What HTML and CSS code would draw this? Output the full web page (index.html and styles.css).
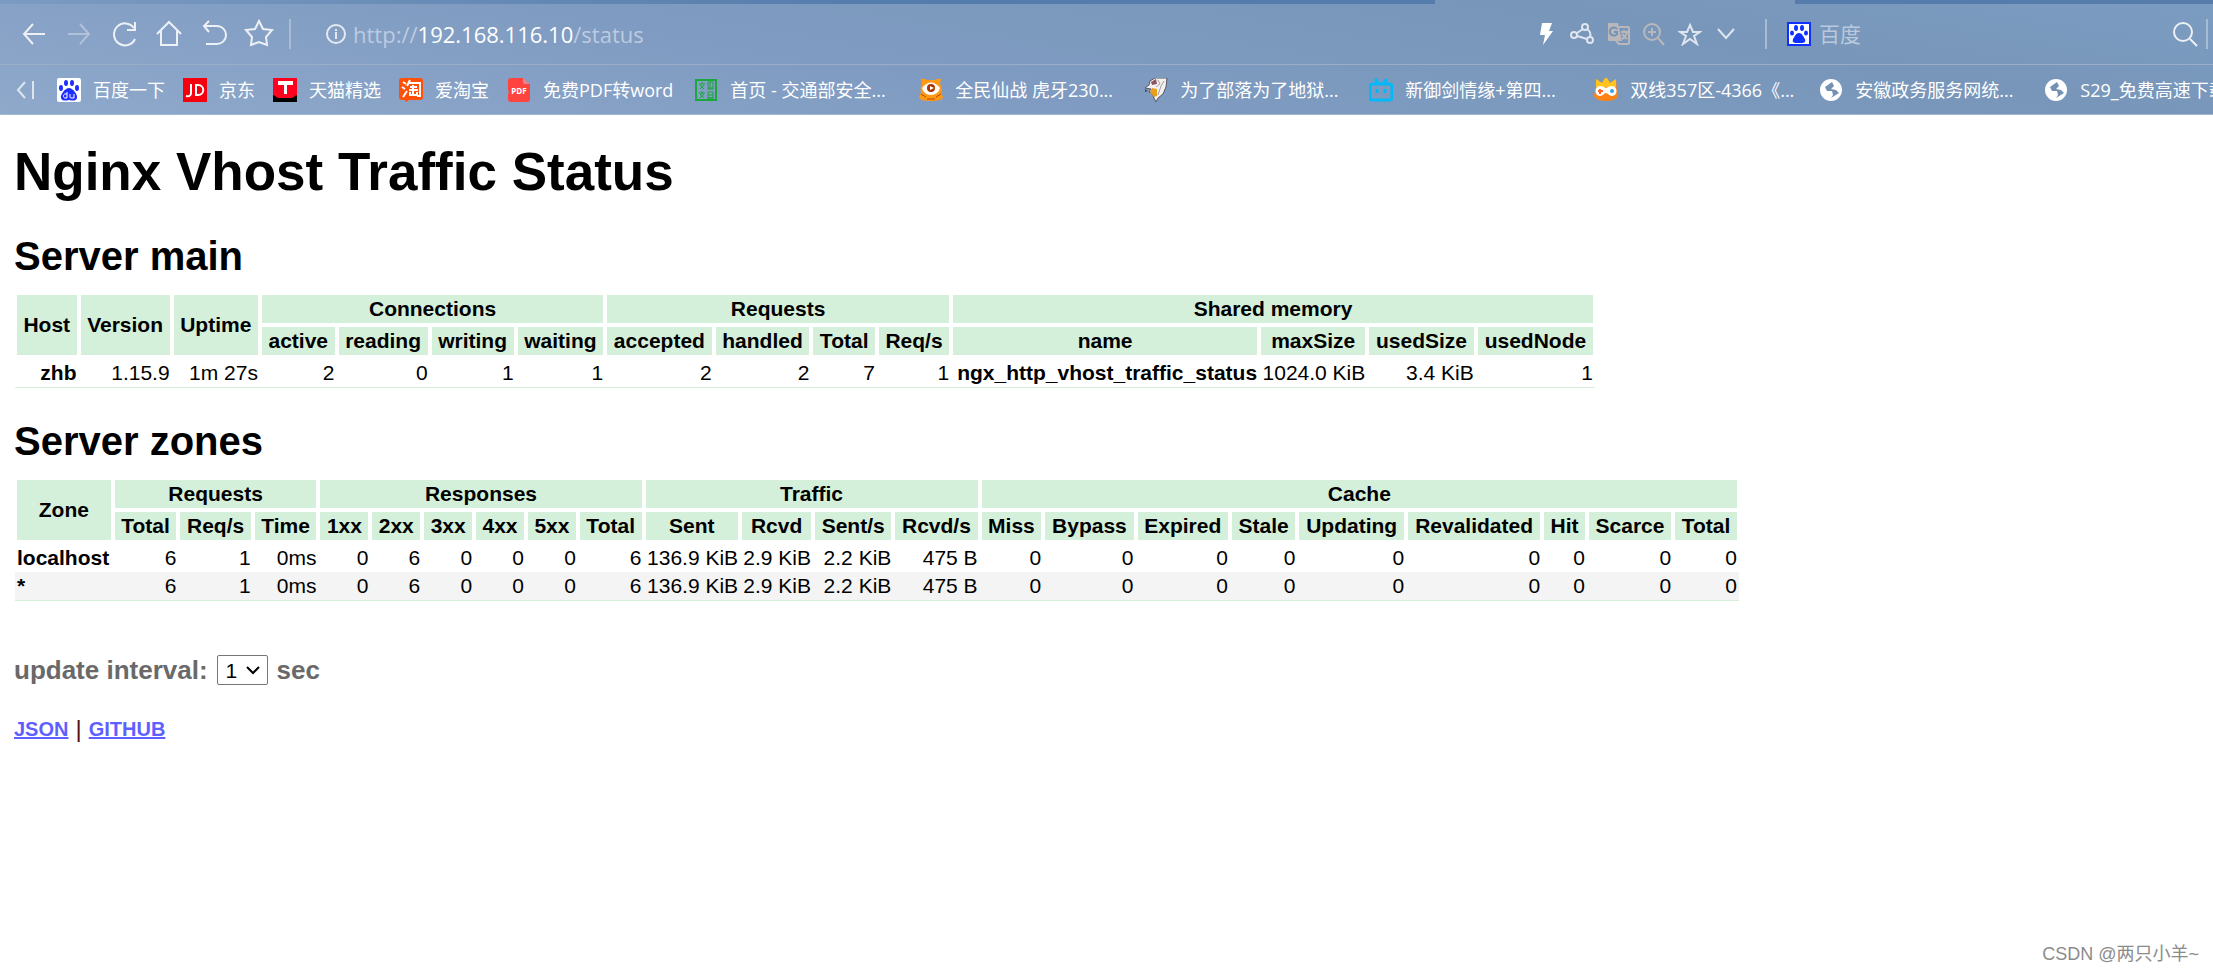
FILE: index.html
```html
<!DOCTYPE html>
<html lang="zh-CN">
<head>
<meta charset="utf-8">
<title>Nginx Vhost Traffic Status</title>
<link rel="stylesheet" href="styles.css">
</head>
<body>
<header class="browser">
  <div class="tabstrip"><span class="tabs-left"></span><span class="tab-active"></span><span class="tabs-right"></span></div>
  <div class="toolbar">
    <nav class="nav" aria-label="导航">
      <button class="tool" aria-label="后退"><svg viewBox="0 0 30 30"><path d="M26 15H5M14 5L5 15l9 10"/></svg></button>
      <button class="tool dim" aria-label="前进"><svg viewBox="0 0 30 30"><path d="M4 15h21M16 5l9 10-9 10"/></svg></button>
      <button class="tool" aria-label="刷新"><svg viewBox="0 0 30 30"><path d="M26 20A11 11 0 1 1 25 9M26 3v8h-8"/></svg></button>
      <button class="tool" aria-label="主页"><svg viewBox="0 0 30 30"><path d="M3 15L15 3l12 12M7 12v14h16V12"/></svg></button>
      <button class="tool" aria-label="恢复"><svg viewBox="0 0 30 30"><path d="M10 2L5 7l5 6M5 7h13a9 9 0 0 1 0 18H7"/></svg></button>
      <button class="tool" aria-label="收藏"><svg viewBox="0 0 30 30"><path d="M15 2l4 8 9 1-6 7 1 8-8-3-8 3 1-8-6-7 9-1z"/></svg></button>
    </nav>
    <span class="divider"></span>
    <div class="address">
      <svg class="info" viewBox="0 0 22 22"><circle cx="11" cy="11" r="9"/><path d="M11 9v7M11 6v2"/></svg>
      <span class="url">http://<b>192.168.116.10</b>/status</span>
    </div>
    <div class="actions">
      <button class="act" aria-label="极速"><svg viewBox="0 0 24 24"><path class="solid" d="M8 1h10l-3 8h4L9 23l2-10H6z"/></svg></button>
      <button class="act" aria-label="分享"><svg viewBox="0 0 24 24"><circle cx="15" cy="5" r="3"/><circle cx="4" cy="13" r="3"/><circle cx="20" cy="18" r="3"/><path d="M13 7l-6 4M7 14l10 3M17 7c3 2 4 5 3 8"/></svg></button>
      <button class="act warm" aria-label="翻译"><svg viewBox="0 0 24 24"><path d="M13 5h9q1 0 1 1v15q0 1-1 1h-9l-3-3"/><path class="solid" d="M3 1h9l4 18H3q-1 0-1-1V2q0-1 1-1z"/><path class="cut" d="M11 7a4 4 0 1 0 0 5v-2H8"/><path d="M15 10h7M18 8v2M21 10c-1 4-3 6-5 7M16 12l5 5"/></svg></button>
      <button class="act warm" aria-label="放大"><svg viewBox="0 0 24 24"><circle cx="10" cy="10" r="8"/><path d="M16 16l6 7M6 10h8M10 6v8"/></svg></button>
      <button class="act" aria-label="加入收藏"><svg viewBox="0 0 24 24"><path d="M12 3l3 7h7l-6 4 3 8-7-5-7 5 3-8-6-4h7z"/></svg></button>
      <button class="act" aria-label="更多"><svg viewBox="0 0 24 24"><path d="M4 7l8 9 8-9"/></svg></button>
    </div>
    <span class="divider"></span>
    <div class="search">
      <svg class="paw" viewBox="0 0 24 24"><path d="M1 1h22v22H1z"/><g><ellipse cx="5" cy="11" rx="2" ry="2.500"/><ellipse cx="9" cy="6" rx="2" ry="3"/><ellipse cx="15" cy="6" rx="2" ry="3"/><ellipse cx="19" cy="11" rx="2" ry="2.500"/><path d="M12 11c3 0 4 3 6 6 1 3-1 4-3 4H9c-2 0-4-1-3-4 2-3 3-6 6-6z"/></g></svg>
      <input class="query" type="text" placeholder="百度" aria-label="百度搜索">
      <button class="tool" aria-label="搜索"><svg viewBox="0 0 30 30"><circle cx="13" cy="13" r="9"/><path d="M20 20l7 7"/></svg></button>
    </div>
    <span class="divider"></span>
  </div>
  <nav class="bookmarks" aria-label="书签">
    <button class="collapse" aria-label="收起"><svg viewBox="0 0 18 24"><path d="M9 4L2 12l7 8M17 3v18"/></svg></button>
    <a class="mark" href="#"><svg viewBox="0 0 24 24"><rect width="24" height="24" rx="2" fill="#fff"/><g fill="#1f2fff"><ellipse cx="4" cy="10" rx="2" ry="3"/><ellipse cx="9" cy="5" rx="2" ry="3"/><ellipse cx="15" cy="5" rx="2" ry="3"/><ellipse cx="20" cy="10" rx="2" ry="3"/><path d="M12 10c4 0 9 7 8 10s-4 3-8 2c-4 1-7 1-8-2s4-10 8-10z"/></g><path d="M10 14v6H8c-2 0-2-4 0-4h2M13 16v3q0 1 1 1h3v-4" fill="none" stroke="#fff"/></svg><span>百度一下</span></a>
    <a class="mark" href="#"><svg viewBox="0 0 24 24"><path fill="#f5000f" d="M0 0h24v24H0z"/><path d="M8 6v9q0 4-5 3M13 7v10h2c7 0 7-10 0-10z" fill="none" stroke="#fff" stroke-width="2"/></svg><span>京东</span></a>
    <a class="mark" href="#"><svg viewBox="0 0 24 24"><path fill="#000" d="M0 0h24v24H0z"/><path fill="#ff001f" d="M0 0h24v17l-2 1-3 2H5l-3-2-2-1z"/><path d="M5 3h15v4h-6v9h-3V7H5z" fill="#fff"/></svg><span>天猫精选</span></a>
    <a class="mark" href="#"><svg viewBox="0 0 24 24"><path fill="#ff5008" d="M3 0h18q3 0 3 3v16q0 3-3 3H10l-3 2-1-2H3q-3 0-3-3V3q0-3 3-3z"/><path d="M4 4l3 2M3 9l3 2M4 19l4-6M11 2L8 8M10 5h11v13h-3M11 9h7M10 12h9M14 7v10M11 14v3h7v-3" fill="none" stroke="#fff" stroke-width="2"/></svg><span>爱淘宝</span></a>
    <a class="mark" href="#"><svg viewBox="0 0 24 24"><path fill="#ff433f" d="M4 0h12l7 6v15q0 3-3 3H4q-3 0-3-3v-5l1-2-1-2V3q0-3 3-3z"/><path fill="#d88a9a" d="M16 0l7 6h-5q-2 0-2-2z"/><text x="12" y="16" text-anchor="middle" class="pdf">PDF</text></svg><span>免费PDF转word</span></a>
    <div class="sites">
      <a class="mark wide" href="#"><svg viewBox="0 0 24 24"><rect x="2" y="2" width="20" height="20" fill="none" stroke="#18a83c" stroke-width="2"/><path d="M5 6h6M8 4v2M6 11l4-4M6 7l4 4M14 4h5v6h-5zM13 11h7M16 4v6M5 15h6M8 13v3M6 20l4-4M6 16l4 4M14 14h5v3h-5zM14 17v3h5v-3M13 20h7" fill="none" stroke="#18a83c" stroke-width="1"/></svg><span>首页 - 交通部安全...</span></a>
      <a class="mark wide" href="#"><svg viewBox="0 0 24 24"><path fill="#ff9812" d="M2 1q3-1 6 1h8q3-2 6-1l-1 5q3 4 1 9l2 4q0 4-12 4T0 19l2-4Q1 9 3 6z"/><path d="M3 10q9-11 18 0-2 7-9 7t-9-7z" fill="#fff"/><circle cx="12" cy="10" r="4" fill="#a83400"/><path d="M11 8l4 2-4 2z" fill="#fff"/><path d="M2 16l5 3M22 16l-5 3M8 21h8" stroke="#bd4800" stroke-width="1"/></svg><span>全民仙战 虎牙230...</span></a>
      <a class="mark wide" href="#"><svg viewBox="0 0 24 24"><path d="M6 3l5-3h12l-1 9-3 7-5 4-2 4-2-4-2-5-3-1 2-3-6-1 4-3z" fill="#f3f1ee" stroke="#5c5361"/><path d="M6 14l2-4 5 1v7l-3 1z" fill="#e8a01c"/><path d="M7 4l5-3 1 5-5 1z" fill="#8b5660"/><path d="M14 2l2 4-4 3M20 3l-3 5-3 9" fill="none" stroke="#a3a0a8"/><path d="M1 11l3 2-3 1z" fill="#4b4856"/></svg><span>为了部落为了地狱...</span></a>
      <a class="mark wide" href="#"><svg viewBox="0 0 24 24"><path d="M4 6h16q3 0 3 3v10q0 3-3 3H4q-3 0-3-3V9q0-3 3-3zM6 1l4 5M18 1l-4 5M8 11v4M16 11v4" fill="none" stroke="#00b9fb" stroke-width="3"/></svg><span>新御剑情缘+第四...</span></a>
      <a class="mark wide" href="#"><svg viewBox="0 0 24 24"><path d="M2 1l6 4 3-5h2l3 5 6-4 1 12 1 5q-2 5-12 5T0 18l1-5z" fill="#ff8416"/><path d="M2 1l6 4 3-5h2l3 5 6-4v8H2z" fill="#ffc51c"/><path d="M6 8q3 0 6 2 3-2 6-2c6 0 6 10 0 10-3 0-4-3-6-3s-3 3-6 3c-6 0-6-10 0-10z" fill="#fff"/><path d="M4 13h5M6 11v5" stroke="#ff6a20" stroke-width="2"/><circle cx="18" cy="13" r="2" fill="#31a4ed"/></svg><span>双线357区-4366《...</span></a>
      <a class="mark wide" href="#"><svg viewBox="0 0 24 24"><circle cx="12" cy="12" r="11" fill="#fff"/><path d="M13 4l-7 5 2 4h5l1 4-2 3 8-5-3-3-5-1 3-3z" fill="#7690b4"/></svg><span>安徽政务服务网统...</span></a>
      <a class="mark wide" href="#"><svg viewBox="0 0 24 24"><circle cx="12" cy="12" r="11" fill="#fff"/><path d="M13 4l-7 5 2 4h5l1 4-2 3 8-5-3-3-5-1 3-3z" fill="#7690b4"/></svg><span>S29_免费高速下载</span></a>
    </div>
  </nav>
</header>
<main class="page">
  <h1>Nginx Vhost Traffic Status</h1>
  <h2>Server main</h2>
  <table class="stats main-stats">
    <thead>
      <tr><th rowspan="2">Host</th><th rowspan="2">Version</th><th rowspan="2">Uptime</th><th colspan="4">Connections</th><th colspan="4">Requests</th><th colspan="4">Shared memory</th></tr>
      <tr><th>active</th><th>reading</th><th>writing</th><th>waiting</th><th>accepted</th><th>handled</th><th>Total</th><th>Req/s</th><th>name</th><th>maxSize</th><th>usedSize</th><th>usedNode</th></tr>
    </thead>
    <tbody>
      <tr><td class="strong">zhb</td><td>1.15.9</td><td>1m 27s</td><td>2</td><td>0</td><td>1</td><td>1</td><td>2</td><td>2</td><td>7</td><td>1</td><td class="strong">ngx_http_vhost_traffic_status</td><td>1024.0 KiB</td><td>3.4 KiB</td><td>1</td></tr>
    </tbody>
  </table>
  <h2>Server zones</h2>
  <table class="stats zone-stats">
    <thead>
      <tr><th rowspan="2">Zone</th><th colspan="3">Requests</th><th colspan="6">Responses</th><th colspan="4">Traffic</th><th colspan="9">Cache</th></tr>
      <tr><th>Total</th><th>Req/s</th><th>Time</th><th>1xx</th><th>2xx</th><th>3xx</th><th>4xx</th><th>5xx</th><th>Total</th><th>Sent</th><th>Rcvd</th><th>Sent/s</th><th>Rcvd/s</th><th>Miss</th><th>Bypass</th><th>Expired</th><th>Stale</th><th>Updating</th><th>Revalidated</th><th>Hit</th><th>Scarce</th><th>Total</th></tr>
    </thead>
    <tbody>
      <tr><td class="strong zone">localhost</td><td>6</td><td>1</td><td>0ms</td><td>0</td><td>6</td><td>0</td><td>0</td><td>0</td><td>6</td><td>136.9 KiB</td><td>2.9 KiB</td><td>2.2 KiB</td><td>475 B</td><td>0</td><td>0</td><td>0</td><td>0</td><td>0</td><td>0</td><td>0</td><td>0</td><td>0</td></tr>
      <tr class="odd"><td class="strong zone">*</td><td>6</td><td>1</td><td>0ms</td><td>0</td><td>6</td><td>0</td><td>0</td><td>0</td><td>6</td><td>136.9 KiB</td><td>2.9 KiB</td><td>2.2 KiB</td><td>475 B</td><td>0</td><td>0</td><td>0</td><td>0</td><td>0</td><td>0</td><td>0</td><td>0</td><td>0</td></tr>
    </tbody>
  </table>
  <div class="interval">
    <label for="refresh">update interval:</label>
    <span class="picker"><select id="refresh"><option>1</option><option>2</option><option>3</option></select><svg viewBox="0 0 16 10"><path d="M2 2l6 6 6-6"/></svg></span>
    <span>sec</span>
  </div>
  <div class="links"><a href="#">JSON</a><span class="bar">|</span><a href="#">GITHUB</a></div>
</main>
<footer class="credit">CSDN @两只小羊~</footer>
</body>
</html>
```
FILE: styles.css
```css
* { box-sizing: border-box; }
body {
  margin: 0;
  min-height: 100vh;
  display: flex;
  flex-direction: column;
  overflow-x: hidden;
  background: #fff;
  color: #000;
  font-family: "Liberation Sans", "Noto Sans CJK SC", sans-serif;
  font-size: 21px;
  line-height: 24px;
}
button { padding: 0; border: 0; background: none; color: inherit; }
svg { display: block; }

/* browser chrome */
.browser {
  background: linear-gradient(10deg, #8fa9cb 0%, #7f9bc1 40%, #7896ba 75%, #7b9cc1 100%);
  color: #fff;
  font-family: "Open Sans", "Noto Sans CJK SC", sans-serif;
  border-bottom: 1px solid #a3b6d0;
}
.tabstrip { display: flex; height: 4px; }
.tabs-left { flex: 1435; background: linear-gradient(90deg, #7c9bc2, #557dac 60%); }
.tab-active { flex: 360; }
.tabs-right { flex: 418; background: #557cab; }
.toolbar {
  display: flex;
  align-items: center;
  height: 61px;
  padding: 0 5px 0 19px;
  border-bottom: 1px solid #9aaeca;
}
.nav { display: flex; gap: 15px; }
.tool svg { width: 30px; height: 30px; fill: none; stroke: #edf1f7; stroke-width: 2; }
.dim { opacity: .4; }
.divider { width: 2px; height: 30px; background: #a9bcd6; }
.nav + .divider { margin-left: 15px; }
.address { display: flex; align-items: center; flex: 1; gap: 6px; padding-left: 34px; }
.info { width: 22px; height: 22px; fill: none; stroke: #e6eaf0; stroke-width: 2; }
.url { color: #bccbe0; font-size: 22px; }
.url b { color: #fff; font-weight: 400; }
.actions { display: flex; gap: 12px; margin-right: 27px; }
.act svg { width: 24px; height: 24px; fill: none; stroke: #dfe6ef; stroke-width: 2; }
.act .solid { fill: #fff; stroke: none; }
.warm svg { stroke: #b9b7b9; }
.warm .solid { fill: #b9b7b9; }
.warm .cut { stroke: #7593b9; }
.search { display: flex; align-items: center; gap: 8px; width: 439px; padding-left: 20px; padding-right: 6px; }
.paw { width: 24px; height: 24px; flex: none; fill: #fff; stroke: #1030ff; stroke-width: 2; }
.paw g { fill: #1030ff; stroke: none; }
.query { flex: 1; min-width: 0; padding: 0; border: 0; outline: 0; background: none; color: #fff; font: inherit; font-size: 21px; }
.query::placeholder { color: #bac9dd; opacity: 1; }
.bookmarks { display: flex; align-items: center; height: 49px; padding-left: 16px; overflow: hidden; white-space: nowrap; font-size: 18px; }
.collapse { margin-right: 23px; }
.collapse svg { width: 18px; height: 24px; fill: none; stroke: #dde5ef; stroke-width: 2; }
.mark { display: flex; align-items: center; gap: 12px; flex: none; margin-right: 18px; color: #fff; text-decoration: none; }
.mark svg { width: 24px; height: 24px; flex: none; }
.sites { display: flex; flex: none; margin-left: 3px; }
.wide { width: 207px; }
.pdf { fill: #fff; font-size: 8px; font-weight: 700; }

/* status page */
.page { flex: 1; padding: 26px 14px 0; }
h1 { margin: 0; font-size: 53px; line-height: 62px; }
h2 { margin: 30px 0 14px; font-size: 40px; line-height: 46px; }
.stats { margin-left: 1px; border-collapse: separate; border-spacing: 0; border-bottom: 1px solid #d5f0da; white-space: nowrap; }
.main-stats { width: 1580px; }
.zone-stats { width: 1724px; }
.stats th { padding: 2px 6px; border: 2px solid #fff; background: #d5f0da; background-clip: padding-box; }
.stats td { padding: 2px; text-align: right; }
.stats tbody tr:first-child td { border-top: 2px solid #fff; }
.stats .zone { text-align: left; }
.strong { font-weight: 700; }
.odd { background: #f4f4f4; }
.interval { display: flex; align-items: center; gap: 9px; margin-top: 54px; color: #696969; font-size: 26px; font-weight: 700; line-height: 30px; }
.picker { display: grid; align-items: center; }
.picker select, .picker svg { grid-area: 1 / 1; }
.picker select { width: 51px; height: 30px; padding: 0 8px; appearance: none; border: 1px solid #767676; border-radius: 2px; background: #fff; color: #000; font: 21px "Liberation Sans", sans-serif; }
.picker svg { justify-self: end; width: 16px; height: 10px; margin-right: 7px; fill: none; stroke: #000; stroke-width: 2; pointer-events: none; }
.links { display: flex; align-items: center; gap: 7px; margin-top: 32px; font-size: 20px; font-weight: 700; }
.links a { color: #5f5fff; }
.bar { color: #5a1010; font-weight: 400; font-size: 24px; }
.credit { padding: 0 14px 6px; text-align: right; color: #8b8b8b; font-size: 18px; }
```
